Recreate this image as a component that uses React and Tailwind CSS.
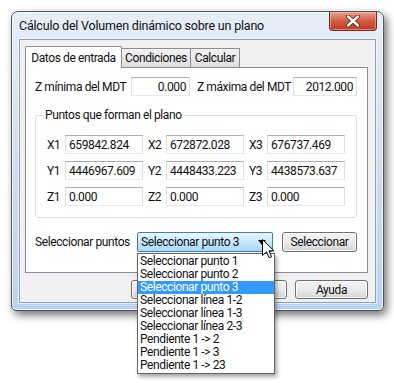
import React from 'react';

const opciones = [
  'Seleccionar punto 1',
  'Seleccionar punto 2',
  'Seleccionar punto 3',
  'Seleccionar línea 1-2',
  'Seleccionar línea 1-3',
  'Seleccionar línea 2-3',
  'Pendiente 1 -> 2',
  'Pendiente 1 -> 3',
  'Pendiente 1 -> 23',
];

const puntos = [
  [['X1', '659842.824'], ['X2', '672872.028'], ['X3', '676737.469']],
  [['Y1', '4446967.609'], ['Y2', '4448433.223'], ['Y3', '4438573.637']],
  [['Z1', '0.000'], ['Z2', '0.000'], ['Z3', '0.000']],
];

function Edit({ value, className = '', right = false }) {
  return (
    <div
      className={`h-[19px] border border-[#dbdfe6] border-t-[#abadb3] border-b-[#e3e9ef] bg-white flex items-center px-[3px] leading-none whitespace-nowrap ${right ? 'justify-end' : ''} ${className}`}
    >
      {value}
    </div>
  );
}

function Boton({ children, className = '', label }) {
  return (
    <div
      aria-label={label}
      className={`flex items-center justify-center rounded-[3px] border border-[#707070] bg-gradient-to-b from-[#f2f2f2] via-[#ebebeb] to-[#d4d4d4] shadow-[inset_0_0_0_1px_rgba(255,255,255,0.8)] leading-none whitespace-nowrap ${className}`}
    >
      {children}
    </div>
  );
}

function Cursor() {
  return (
    <svg width="13" height="20" viewBox="0 0 13 20" className="absolute left-[262px] top-[239px] z-30">
      <path
        d="M0.5 0.5 L0.5 16.5 L4.5 12.8 L7.2 18.8 L9.6 17.8 L7 11.8 L12 11.8 Z"
        fill="#fff"
        stroke="#000"
        strokeWidth="1"
      />
    </svg>
  );
}

export default function App() {
  return (
    <div className="relative w-[394px] h-[383px] bg-white overflow-hidden pl-[11px] pt-[11px] font-['Roboto',Arial,sans-serif] text-[12px] tracking-[-0.4px] text-[#111] whitespace-nowrap">
      {/* Ventana */}
      <div className="w-[373px] h-[300px] flex flex-col rounded-t-[7px] rounded-b-[5px] border border-[#4e5560] bg-gradient-to-b from-[#e6eef8] via-[#cddff1] to-[#bcd4ed] shadow-[3px_4px_9px_rgba(0,0,0,0.55),inset_0_0_0_1px_rgba(255,255,255,0.7)]">
        <div className="h-[27px] flex items-start justify-between pl-[7px] pr-[6px]">
          <span className="mt-[7px] text-[12.5px] leading-[14px] tracking-[-0.2px]">Cálculo del Volumen dinámico sobre un plano</span>
          <div className="w-[48px] h-[19px] rounded-b-[4px] border border-t-0 border-[#6d2b22] bg-gradient-to-b from-[#e8a493] via-[#cf5a44] to-[#c23d22] shadow-[inset_0_0_0_1px_rgba(255,190,170,0.55)] flex items-center justify-center">
            <svg width="14" height="12" viewBox="0 0 14 12">
              <path d="M2 1.5 L12 10.5 M12 1.5 L2 10.5" stroke="#5a2018" strokeWidth="4.2" strokeLinecap="round" />
              <path d="M2 1.5 L12 10.5 M12 1.5 L2 10.5" stroke="#fff" strokeWidth="2.4" strokeLinecap="round" />
            </svg>
          </div>
        </div>

        {/* Area cliente */}
        <div className="mx-[7px] h-[264px] border border-[#8da2b8] bg-[#f0f0f0] shadow-[0_0_0_1px_rgba(255,255,255,0.6)] pl-[5px] pr-[8px] pt-[6px] flex flex-col">
          {/* Pestañas */}
          <div className="flex items-end h-[21px] relative z-10">
            <div className="w-[97px] h-[22px] -mb-px border border-b-0 border-[#898c95] bg-white flex items-center justify-center rounded-t-[2px]">
              Datos de entrada
            </div>
            <div className="w-[69px] h-[19px] border border-b-0 border-l-0 border-[#898c95] bg-gradient-to-b from-[#f2f2f2] to-[#dedede] flex items-center justify-center">
              Condiciones
            </div>
            <div className="w-[49px] h-[19px] border border-b-0 border-l-0 border-[#898c95] bg-gradient-to-b from-[#f2f2f2] to-[#dedede] flex items-center justify-center">
              Calcular
            </div>
          </div>

          {/* Panel */}
          <div className="w-[343px] h-[206px] border border-[#898c95] bg-white pl-[9px] pt-[9px] flex flex-col">
            <div className="flex items-center">
              <span className="w-[96px]">Z mínima del MDT</span>
              <Edit value="0.000" right className="w-[59px]" />
              <span className="w-[96px] ml-[7px]">Z máxima del MDT</span>
              <Edit value="2012.000" right className="w-[64px]" />
            </div>

            <div className="relative mt-[19px] w-[322px] h-[103px] border border-[#d5dfe5] rounded-[3px] pl-[11px] pt-[19px] flex flex-col gap-[7px]">
              <span className="absolute left-[8px] -top-[8px] bg-white px-[1px] leading-[14px]">Puntos que forman el plano</span>
              {puntos.map((fila, i) => (
                <div key={i} className="flex items-center gap-[5px]">
                  {fila.map(([etq, val]) => (
                    <div key={etq} className="flex items-center">
                      <span className="w-[18px]">{etq}</span>
                      <Edit value={val} className="w-[78px]" />
                    </div>
                  ))}
                </div>
              ))}
            </div>

            <div className="flex items-center mt-[14px]">
              <span className="w-[102px]">Seleccionar puntos</span>
              <div className="w-[136px] h-[20px] rounded-[2px] border border-[#3c7fb1] bg-gradient-to-b from-[#eaf6fd] via-[#c7e7fb] to-[#a7d9f5] flex items-center justify-between pl-[3px] pr-[6px]">
                <span>Seleccionar punto 3</span>
                <svg width="8" height="5" viewBox="0 0 8 5">
                  <path d="M0 0 L8 0 L4 5 Z" fill="#000" />
                </svg>
              </div>
              <Boton className="w-[75px] h-[20px] ml-[9px]">Seleccionar</Boton>
            </div>
          </div>

          {/* Botones inferiores (Aceptar y Cancelar quedan tapados por la lista) */}
          <div className="flex justify-end gap-[8px] mt-[7px] -mr-px">
            <Boton label="Aceptar" className="w-[75px] h-[19px] border-[#3c7fb1]" />
            <Boton label="Cancelar" className="w-[73px] h-[19px]" />
            <Boton className="w-[73px] h-[19px]">Ayuda</Boton>
          </div>
        </div>
      </div>

      {/* Lista desplegada */}
      <div className="absolute left-[137px] top-[253px] w-[138px] border border-[#646464] bg-white py-[1px] shadow-[2px_3px_4px_rgba(0,0,0,0.35)] z-20">
        {opciones.map((o, i) => (
          <div
            key={o}
            className={`h-[13px] leading-[13px] pl-[2px] ${i === 2 ? 'bg-[#3399ff] text-white' : ''}`}
          >
            {o}
          </div>
        ))}
      </div>

      <Cursor />
    </div>
  );
}
